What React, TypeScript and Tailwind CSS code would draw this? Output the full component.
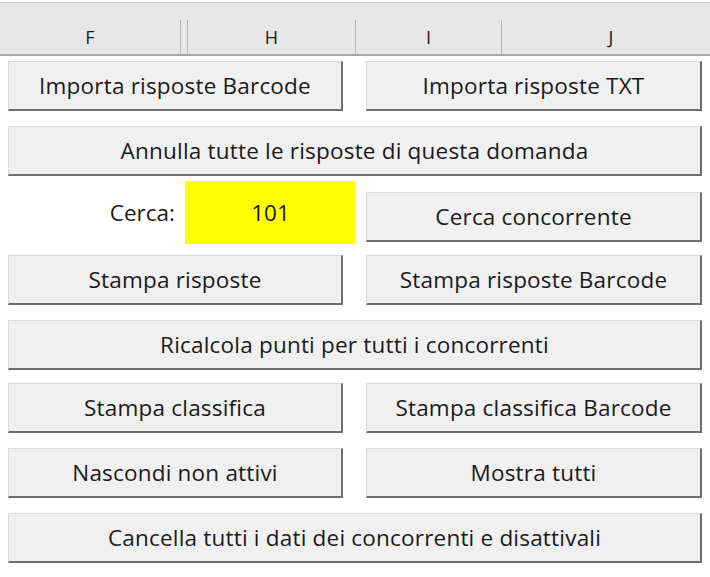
const Btn = ({ label, className = "" }: { label: string; className?: string }) => {
  return (
    <div
      className={
        "flex items-center justify-center h-[50px] bg-[#f0f0f0] border-t border-l border-[#d9d9d9] border-r-2 border-b-2 border-r-[#6e6e6e] border-b-[#6e6e6e] text-[22.5px] tracking-[0.2px] text-[#1a1a1a] " +
        className
      }
    >
      {label}
    </div>
  );
};

const App = () => {
  return (
    <div className="w-[710px] h-[577px] bg-white overflow-hidden" style={{ fontFamily: "'Open Sans', Lato, sans-serif" }}>
      {/* column header */}
      <div className="h-[54px] bg-[#e6e6e6] border-t border-[#c8c8c8] border-b-2 border-b-[#a8a8a8] mt-[2px] flex flex-col">
        <div className="h-[17px]" />
        <div className="flex flex-1 text-[18px] text-[#1a1a1a]">
          <div className="w-[181px] flex items-center justify-center border-r border-[#b4b4b4]">F</div>
          <div className="w-[7px] border-r border-[#b4b4b4]" />
          <div className="w-[168px] flex items-center justify-center border-r border-[#b4b4b4]">H</div>
          <div className="w-[146px] flex items-center justify-center border-r border-[#b4b4b4]">I</div>
          <div className="flex-1 flex items-center justify-center pl-[10px]">J</div>
        </div>
      </div>

      <div className="w-[694px] ml-[8px] flex flex-col">
        <div className="flex gap-[23px] mt-[5px]">
          <Btn label="Importa risposte Barcode" className="w-[335px]" />
          <Btn label="Importa risposte TXT" className="flex-1" />
        </div>
        <Btn label="Annulla tutte le risposte di questa domanda" className="mt-[15px]" />
        <div className="flex mt-[5px] h-[63px]">
          <div className="w-[177px] flex items-center justify-end pr-[10px] text-[22.5px] text-[#1a1a1a]">Cerca:</div>
          <div className="w-[171px] bg-[#ffff00] flex items-center justify-center text-[22.5px] text-[#1a1a1a]">101</div>
          <div className="flex-1 ml-[10px] pt-[11px] flex flex-col">
            <Btn label="Cerca concorrente" className="w-full" />
          </div>
        </div>
        <div className="flex gap-[23px] mt-[11px]">
          <Btn label="Stampa risposte" className="w-[335px]" />
          <Btn label="Stampa risposte Barcode" className="flex-1" />
        </div>
        <Btn label="Ricalcola punti per tutti i concorrenti" className="mt-[15px]" />
        <div className="flex gap-[23px] mt-[13px]">
          <Btn label="Stampa classifica" className="w-[335px]" />
          <Btn label="Stampa classifica Barcode" className="flex-1" />
        </div>
        <div className="flex gap-[23px] mt-[15px]">
          <Btn label="Nascondi non attivi" className="w-[335px]" />
          <Btn label="Mostra tutti" className="flex-1" />
        </div>
        <Btn label="Cancella tutti i dati dei concorrenti e disattivali" className="mt-[15px]" />
      </div>
    </div>
  );
};

export default App;
